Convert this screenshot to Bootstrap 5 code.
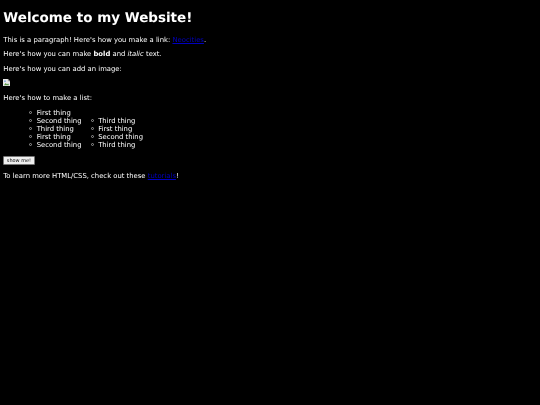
<!DOCTYPE html>
<html lang="en">
<head>
<meta charset="utf-8">
<title>Welcome</title>
<link rel="stylesheet" href="https://cdn.jsdelivr.net/npm/bootstrap@5.3.0/dist/css/bootstrap.min.css">
<style>
html, body { background: #000; }
body { color: #fff; font-family: "DejaVu Sans", sans-serif; font-size: 6.83px; line-height: 8px; text-rendering: geometricPrecision; }
.page-wrap { padding: 10.9px 3.33px 0; filter: blur(.3px); }
.page-title { font-family: "DejaVu Sans", sans-serif; font-size: 13.5px; line-height: 15.6px; font-weight: 700; margin: 0 0 9.5px; }
.copy { margin: 0 0 6.5px; line-height: 8px; }
.copy a { color: #0000c0; }
.copy b { font-weight: 700; }
.broken { display: block; width: 7px; height: 7px; margin: 0 0 7.6px; }
.lists { display: flex; align-items: flex-end; margin: 7px 0 7px; padding-left: 16.67px; }
.thing-list { list-style: none; margin: 0; padding: 0 0 0 16.67px; }
.thing-list li { line-height: 8px; }
.thing-list li::before { content: ""; display: inline-block; width: 3px; height: 3px; border: .7px solid #999; border-radius: 50%; margin-left: -7.6px; margin-right: 4.6px; vertical-align: .8px; }
.show-btn { display: block; font-family: "DejaVu Sans", sans-serif; font-size: 4.95px; line-height: 7px; height: 8.5px; padding: 0 2.5px; background: #efefef; color: #000; border: .8px solid #767676; border-radius: 1px; margin: 0 0 7px; }
</style>
</head>
<body>
<main class="page-wrap">
  <h1 class="page-title">Welcome to my Website!</h1>
  <p class="copy">This is a paragraph! Here's how you make a link: <a href="#">Neocities</a>.</p>
  <p class="copy">Here's how you can make <b>bold</b> and <i>italic</i> text.</p>
  <p class="copy">Here's how you can add an image:</p>
  <svg class="broken" viewBox="0 0 8 8" aria-hidden="true"><path d="M0 0H5.5L8 2.5V8H0Z" fill="#e8e8e8"/><path d="M5.5 0V2.5H8" fill="#9a9a9a"/><path d="M1 7L3 4.5 4.5 6 6 5 7 7Z" fill="#5a9a4a"/><circle cx="2.3" cy="2.5" r="1" fill="#7fa8e0"/></svg>
  <p class="copy mb-0">Here's how to make a list:</p>
  <div class="lists">
    <ul class="thing-list">
      <li>First thing</li><li>Second thing</li><li>Third thing</li><li>First thing</li><li>Second thing</li>
    </ul>
    <ul class="thing-list">
      <li>Third thing</li><li>First thing</li><li>Second thing</li><li>Third thing</li>
    </ul>
  </div>
  <button type="button" class="show-btn">show me!</button>
  <p class="copy">To learn more HTML/CSS, check out these <a href="#">tutorials</a>!</p>
</main>
<script src="https://cdn.jsdelivr.net/npm/bootstrap@5.3.0/dist/js/bootstrap.bundle.min.js"></script>
</body>
</html>
